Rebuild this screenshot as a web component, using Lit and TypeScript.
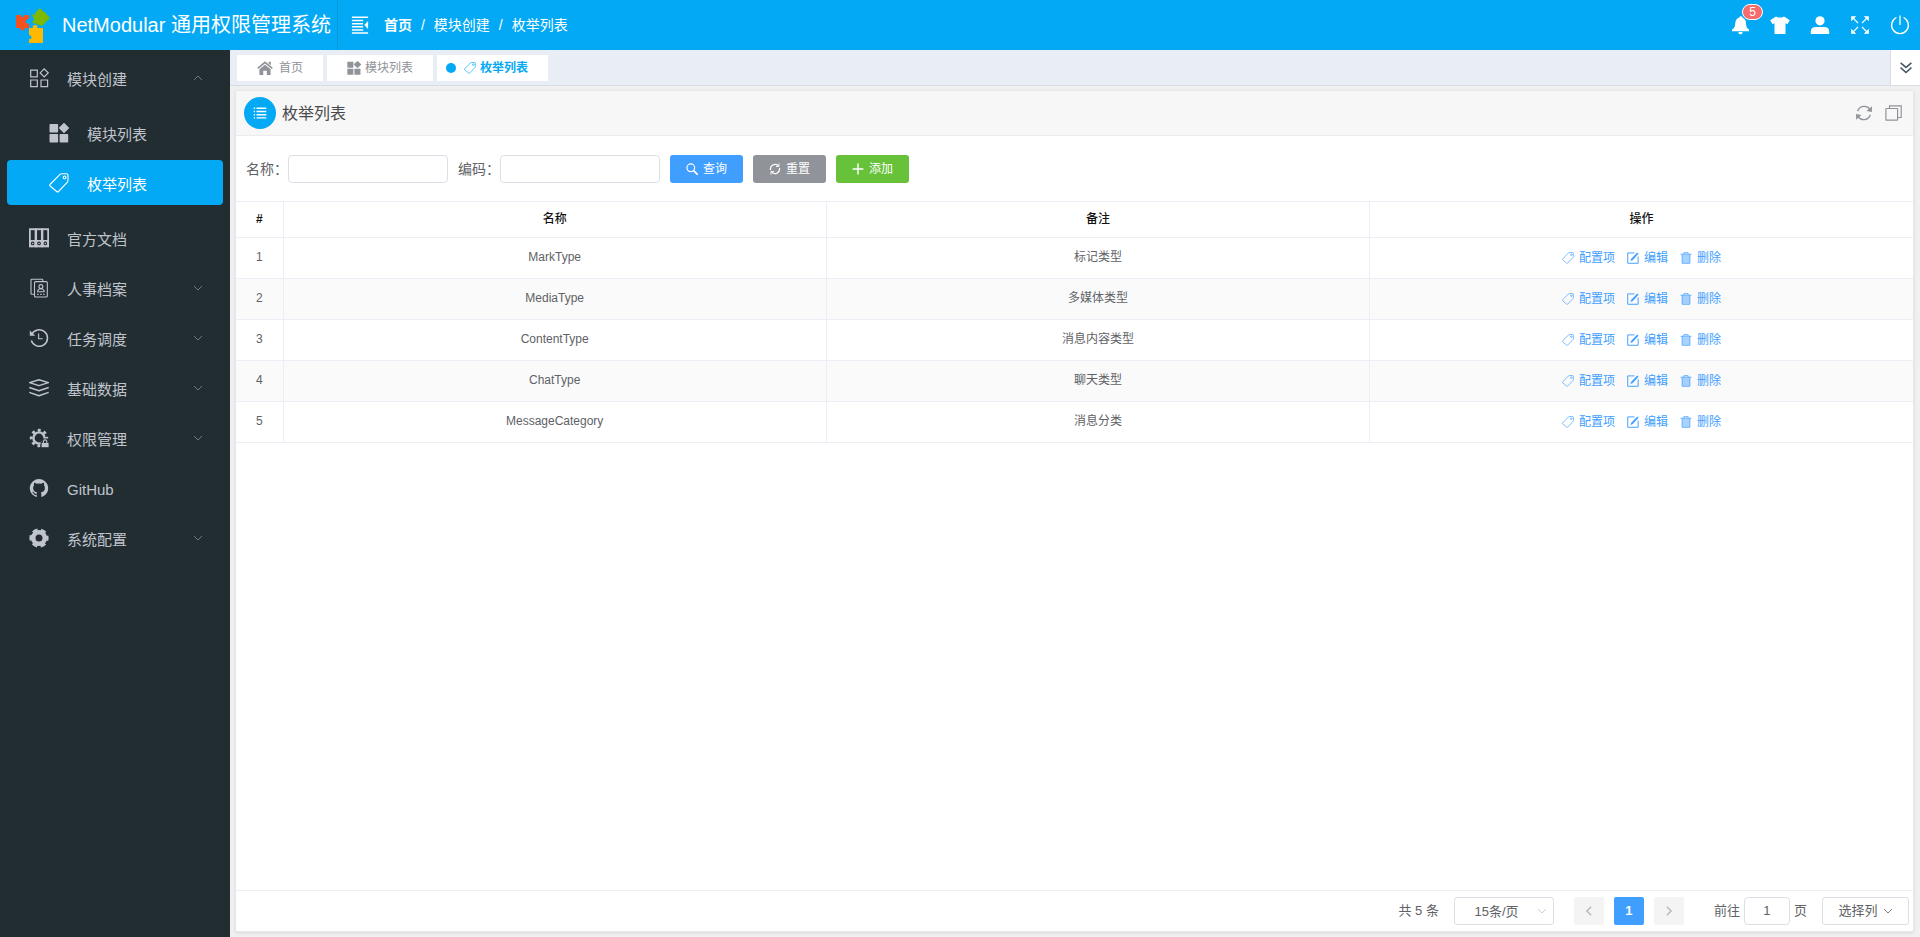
import { LitElement, html, svg, css, nothing } from "lit";
import { customElement } from "lit/decorators.js";
import { classMap } from "lit/directives/class-map.js";

const tag = svg`<g fill="none" stroke="currentColor" stroke-width="1.1" stroke-linejoin="round"><path d="M1 11.500 L10.500 1.800 Q11.500 .8 13 .8 H17.600 Q19 .8 19 2.200 V7 Q19 8.600 18 9.600 L9.500 18.500 Q8.600 19.400 7.700 18.500 L1.100 13 Q.4 12.200 1 11.500Z"/><circle cx="15.600" cy="4.400" r="1.400"/></g>`;

const icons: Record<string, unknown> = {
  tag,
  modules: svg`<g fill="none" stroke="currentColor" stroke-width="1.200"><path d="M1.700 2.200h6.600v6.600H1.700zM1.700 12h6.600v6.600H1.700zM12 12h6.600v6.600H12zM15.200 .9l4 4-4 4-4-4z"/></g>`,
  grid: svg`<g fill="currentColor"><rect x="0.5" y="1" width="8.6" height="8.6" rx=".8"/><rect x="0.5" y="11" width="8.6" height="8.6" rx=".8"/><rect x="10.6" y="11" width="8.6" height="8.6" rx=".8"/><rect x="11.2" y="1.2" width="7.6" height="7.6" rx=".8" transform="rotate(45 15 5)"/></g>`,
  books: svg`<g fill="none" stroke="currentColor" stroke-width="1.9"><rect x=".8" y="1.2" width="5.8" height="17.2"/><rect x="7.1" y="1.2" width="5.8" height="17.2"/><rect x="13.4" y="1.2" width="5.8" height="17.2"/></g><path fill="currentColor" fill-rule="evenodd" d="M.8 12h18.4v7H.8zM3.7 13.6a1.9 1.9 0 1 0 .01 0M10 13.6a1.9 1.9 0 1 0 .01 0M16.3 13.6a1.9 1.9 0 1 0 .01 0"/><g fill="currentColor"><circle cx="3.7" cy="15.5" r=".8"/><circle cx="10" cy="15.5" r=".8"/><circle cx="16.3" cy="15.5" r=".8"/></g>`,
  archive: svg`<g fill="none" stroke="currentColor" stroke-width="1.1" stroke-linejoin="round"><path d="M5.5 16.200H2.800Q2 16.200 2 15.400V2Q2 1.200 2.800 1.200H13Q13.800 1.200 13.800 2V3.600"/><rect x="5.5" y="3.6" width="12.8" height="15.4" rx="1"/><circle cx="11.9" cy="8.6" r="2"/><path d="M8.6 13.800Q8.600 10.800 11.900 10.800T15.200 13.800ZM8.200 16.400h1.400M11.200 16.400h1.400M14.200 16.400h1.400"/></g>`,
  history: svg`<g fill="none" stroke="currentColor" stroke-width="1.5"><path d="M2.600 6.600A8.300 8.300 0 1 1 2.300 12.600"/><path d="M9.600 5.600v5.200h4.200" stroke-width="1.1"/></g><path fill="currentColor" d="M.8 2.400v5.400h5.400z"/>`,
  layers: svg`<g fill="none" stroke="currentColor" stroke-width="1.500" stroke-linejoin="round"><path d="M.6 4.600L10 1.800 19.400 4.600 10 7.600ZM.3 9.500L10 12.800l9.700-3.300M.3 14.400L10 17.800 19.700 14.400"/></g>`,
  gearLock: svg`<g fill="none" stroke="currentColor"><circle cx="10" cy="10" r="5.600" stroke-width="2.400"/><circle cx="10" cy="10" r="7.800" stroke-width="2.800" stroke-dasharray="2.900 3.226" stroke-dashoffset="1.450"/></g><path fill="#222d32" d="M11.600 13.400h1.400v-3h7V20h-8.400z"/><path fill="currentColor" d="M12.600 15h7v4.200h-7z"/><path d="M14.400 15v-1.400a1.700 1.700 0 0 1 3.400 0V15" fill="none" stroke="currentColor" stroke-width="1.1"/>`,
  github: svg`<path fill="currentColor" transform="translate(.8 .8) scale(1.150)" d="M8 .2a8 8 0 0 0-2.53 15.59c.4.07.55-.17.55-.38v-1.5c-2 .37-2.53-.49-2.69-.94-.09-.23-.48-.94-.82-1.13-.28-.15-.68-.52-.01-.53.63-.01 1.08.58 1.23.82.72 1.21 1.87.87 2.33.66.07-.52.28-.87.51-1.07-1.78-.2-3.64-.89-3.64-3.95 0-.87.31-1.59.82-2.15-.08-.2-.36-1.02.08-2.12 0 0 .67-.21 2.2.82a7.6 7.6 0 0 1 4 0c1.53-1.04 2.2-.82 2.2-.82.44 1.1.16 1.92.08 2.12.51.56.82 1.27.82 2.15 0 3.07-1.87 3.75-3.65 3.95.29.25.54.73.54 1.48v2.19c0 .21.15.46.55.38A8 8 0 0 0 8 .2z"/>`,
  gear: svg`<g fill="none" stroke="currentColor"><circle cx="10" cy="10" r="5.800" stroke-width="4.600"/><circle cx="10" cy="10" r="8.200" stroke-width="2.800" stroke-dasharray="5.200 3.387" stroke-dashoffset="2.600"/></g>`,
  bell: svg`<path fill="currentColor" d="M10.800 1.200c1 0 1.500.6 1.500 1.400 2.600 1 3.600 3.200 3.700 5.600.1 3.600 1 5 3 6.400v1.600H2l.0-1.600C4.400 13.400 5 11.600 5.300 8c.2-2.600 1.600-4.600 4-5.400 0-.8.5-1.400 1.500-1.400zM8.400 17h4.200c0 1.400-.9 2.300-2.100 2.300S8.400 18.400 8.400 17z"/>`,
  shirt: svg`<path fill="currentColor" d="M6 1.400q4 2.400 8 0l5.800 3.800-2.400 4-1.900-.9V19H4.500V8.300l-1.900.9-2.400-4z"/>`,
  user: svg`<g fill="currentColor"><circle cx="10" cy="5.800" r="4.600"/><path d="M.8 19v-2.600Q.8 12 6.200 12h7.600q5.400 0 5.400 4.400V19z"/></g>`,
  full: svg`<g fill="none" stroke="currentColor" stroke-width="1.200"><path d="M2 2l6 6M18 2l-6 6M2 18l6-6M18 18l-6-6"/></g><path fill="currentColor" d="M1.200 1.200h5l-5 5zM18.800 1.200v5l-5-5zM1.200 18.800v-5l5 5zM18.800 18.800h-5l5-5z"/>`,
  power: svg`<path fill="none" stroke="currentColor" stroke-width="1.300" stroke-linecap="round" d="M10 .8v8.600M6 2.800a8.400 8.400 0 1 0 8 0"/>`,
  fold: svg`<g fill="none" stroke="currentColor" stroke-width="1.700"><path d="M1 1.500h18M1 5h12.500M1 8.500h12.500M1 12h12.500M1 15.500h12.500M1 18.800h18"/></g><path fill="currentColor" d="M19 5.500v9l-4.200-4.500z"/>`,
  home: svg`<path fill="currentColor" d="M10 1.600l9.800 8.200-1.300 1.500L10 4.300l-8.500 7L.2 9.800zM14.600 2.200h2.600v4.500l-2.600-2.200zM10 5.800l7 5.800v7.200h-4.800v-5.400H7.800v5.400H3v-7.200z"/>`,
  list: svg`<g fill="currentColor"><path d="M5 2.200h14v2H5zM5 6.800h14v2H5zM5 11.400h14v2H5zM5 16h14v2H5zM1 2.200h2v2H1zM1 6.800h2v2H1zM1 11.400h2v2H1zM1 16h2v2H1z"/></g>`,
  refresh: svg`<g fill="none" stroke="currentColor" stroke-width="1.500"><path d="M3 8A7.600 7.600 0 0 1 16.600 6M17 12A7.600 7.600 0 0 1 3.400 14"/></g><path fill="currentColor" d="M18.800 2.600v6.200l-6-1zM1.200 17.400v-6.200l6 1z"/>`,
  windows: svg`<g fill="none" stroke="currentColor" stroke-width="1.300"><rect x="1" y="5" width="13" height="13" rx=".6"/><path d="M5 5V2h13v13h-4"/></g>`,
  search: svg`<g fill="none" stroke="currentColor" stroke-width="2" stroke-linecap="round"><circle cx="8" cy="8" r="6.400"/><path d="M13 13l5.600 5.600" stroke-width="2.800"/></g>`,
  reset: svg`<g fill="none" stroke="currentColor" stroke-width="2"><path d="M2.600 12A7.800 7.800 0 0 1 15.400 4.400M17.400 8A7.800 7.800 0 0 1 4.600 15.600"/><path d="M16.600.8v5h-5M3.400 19.200v-5h5" stroke-width="1.600"/></g>`,
  plus: svg`<path fill="none" stroke="currentColor" stroke-width="2.400" d="M10 1v18M1 10h18"/>`,
  edit: svg`<g fill="none" stroke="currentColor" stroke-width="1.600"><path d="M12.500 1.500H1.200v17.300h17.400V7.500"/></g><path fill="currentColor" d="M17.200.8l2 2-10 10.800-3.600 1.600 1.400-3.800z"/>`,
  trash: svg`<path fill="currentColor" opacity=".45" d="M4 5h12v13H4z"/><g fill="none" stroke="currentColor" stroke-width="1.400"><path d="M1 3.800h18M6.500 3.500V1.200h7v2.300M3.600 4v14.800h12.800V4"/></g>`,
  down: svg`<path fill="none" stroke="currentColor" stroke-width="1.700" d="M2 6l8 8 8-8"/>`,
  up: svg`<path fill="none" stroke="currentColor" stroke-width="1.700" d="M2 14l8-8 8 8"/>`,
  left: svg`<path fill="none" stroke="currentColor" stroke-width="2.400" d="M13.500 3l-7 7 7 7"/>`,
  right: svg`<path fill="none" stroke="currentColor" stroke-width="2.400" d="M6.500 3l7 7-7 7"/>`,
  dbldown: svg`<path fill="none" stroke="currentColor" stroke-width="2.600" d="M1 1.500l9 7.500 9-7.500M1 9.500l9 8 9-8"/>`,
};

const icon = (name: string, size = "") =>
  html`<svg class="icon ${size}" viewBox="0 0 20 20" aria-hidden="true">${icons[name]}</svg>`;

interface MenuItem {
  label: string;
  icon: string;
  arrow?: "up" | "down";
  active?: boolean;
  children?: MenuItem[];
}

const menu: MenuItem[] = [
  {
    label: "模块创建",
    icon: "modules",
    arrow: "up",
    children: [
      { label: "模块列表", icon: "grid" },
      { label: "枚举列表", icon: "tag", active: true },
    ],
  },
  { label: "官方文档", icon: "books" },
  { label: "人事档案", icon: "archive", arrow: "down" },
  { label: "任务调度", icon: "history", arrow: "down" },
  { label: "基础数据", icon: "layers", arrow: "down" },
  { label: "权限管理", icon: "gearLock", arrow: "down" },
  { label: "GitHub", icon: "github" },
  { label: "系统配置", icon: "gear", arrow: "down" },
];

const rows = [
  ["MarkType", "标记类型"],
  ["MediaType", "多媒体类型"],
  ["ContentType", "消息内容类型"],
  ["ChatType", "聊天类型"],
  ["MessageCategory", "消息分类"],
];

const base = css`
  * { box-sizing: border-box; }
  a { color: inherit; text-decoration: none; }
  button, input, select { font: inherit; color: inherit; margin: 0; }
  button { border: 0; padding: 0; background: none; cursor: pointer; }
  .icon { width: 20px; height: 20px; flex: none; display: block; }
  .s18 { width: 18px; height: 18px; }
  .s16 { width: 16px; height: 16px; }
  .s14 { width: 14px; height: 14px; }
  .s12 { width: 12px; height: 12px; }
  .s10 { width: 10px; height: 10px; }
`;

@customElement("app-header")
export class AppHeader extends LitElement {
  static styles = [base, css`
    :host { display: flex; height: 50px; background: #03a9f4; color: #fff; }
    .brand { display: flex; align-items: center; padding: 0 6px 0 14px; gap: 12px; font-size: 20px; line-height: 50px; white-space: nowrap; border-right: 1px solid #0299dd; }
    .logo { width: 36px; height: 36px; flex: none; }
    .bar { display: flex; align-items: center; flex: 1; padding: 0 10px 0 13px; }
    .crumbs { display: flex; gap: 9px; margin-left: 15px; font-size: 14px; line-height: 20px; }
    .home { font-weight: 700; }
    .actions { display: flex; gap: 20px; margin-left: auto; }
    .action { position: relative; display: flex; align-items: center; height: 50px; }
    .badge { position: absolute; left: 12px; top: 4px; height: 16px; padding: 0 6px; min-width: 21px; border: 1px solid #fff; border-radius: 8px; background: #f56c6c; font-size: 12px; line-height: 14px; text-align: center; }
  `];
  render() {
    return html`
      <div class="brand">
        <svg class="logo" viewBox="0 0 36 36" aria-hidden="true">
          <path fill="#f4511e" d="M2 8h5q-.6 2 1.300 2.300Q10.500 10 10 8h5v4q-3.400-.4-3.400 2.500 0 2.200 3.400 2V21h-4q0 2.500-2.300 2.500T6 21H2z"/>
          <path fill="#7cb900" d="M17.500 7l3.500 1q1.200-.6 0-2l5-5 3.500 4q2.300-.6 2 1.200l4.500 4.500-8.500 9q-1.600-3-3.200-1.700-2-.2-2.300-1.500-2.300.5-3.600-1-.4-1.800 2-2.700z"/>
          <path fill="#ffb900" d="M15 21h4q-1-2.800 2.200-3 3 .2 2 3h5.800v15H15v-4q2 .7 2.600-1.500Q17 27.500 15 28z"/>
        </svg>
        <span>NetModular 通用权限管理系统</span>
      </div>
      <div class="bar">
        <button aria-label="折叠菜单">${icon("fold", "s18")}</button>
        <nav class="crumbs"><a class="home" href="#">首页</a><span>/</span><span>模块创建</span><span>/</span><span>枚举列表</span></nav>
        <div class="actions">
          <button class="action" aria-label="消息">${icon("bell")}<span class="badge">5</span></button>
          <button class="action" aria-label="皮肤">${icon("shirt")}</button>
          <button class="action" aria-label="用户">${icon("user")}</button>
          <button class="action" aria-label="全屏">${icon("full")}</button>
          <button class="action" aria-label="退出">${icon("power")}</button>
        </div>
      </div>`;
  }
}

@customElement("app-sidebar")
export class AppSidebar extends LitElement {
  static styles = [base, css`
    :host { display: block; background: #222d32; color: #c0c4cc; padding: 5px 7px; font-size: 15px; }
    .menu, .sub { list-style: none; margin: 0; padding: 0; display: flex; flex-direction: column; gap: 5px; }
    .sub { padding: 10px 0 5px; }
    .item { display: flex; align-items: center; height: 45px; padding: 0 20px 0 22px; border-radius: 4px; line-height: 24px; }
    .child { padding-left: 42px; }
    .label { flex: 1; margin-left: 18px; padding-top: 5px; }
    .arrow { color: #7c868b; }
    .active { background: #03a9f4; color: #fff; }
  `];
  item(m: MenuItem, child = false): unknown {
    return html`<li>
      <a href="#" class=${classMap({ item: true, child, active: !!m.active })}>
        ${icon(m.icon)}<span class="label">${m.label}</span>
        ${m.arrow ? html`<span class="arrow">${icon(m.arrow, "s10")}</span>` : nothing}
      </a>
      ${m.children ? html`<ul class="sub">${m.children.map((c) => this.item(c, true))}</ul>` : nothing}
    </li>`;
  }
  render() {
    return html`<nav><ul class="menu">${menu.map((m) => this.item(m))}</ul></nav>`;
  }
}

@customElement("app-tabs")
export class AppTabs extends LitElement {
  static styles = [base, css`
    :host { display: flex; height: 35px; background: #e9eef6; border-bottom: 1px solid #d8dce5; color: #909399; font-size: 12px; }
    .tabs { display: flex; flex: 1; gap: 4px; padding: 5px 7px 4px; }
    .tab { display: flex; align-items: center; gap: 4px; padding: 0 20px 1px; background: #fff; line-height: 20px; white-space: nowrap; }
    .first { gap: 6px; }
    .active { color: #03a9f4; font-weight: 700; padding-left: 9px; }
    .dot { width: 10px; height: 10px; margin-right: 4px; border-radius: 50%; background: #03a9f4; }
    .more { width: 30px; display: flex; align-items: center; justify-content: center; background: #fff; border-left: 1px solid #d8dce5; color: #48576a; }
  `];
  render() {
    return html`
      <nav class="tabs">
        <a href="#" class="tab first">${icon("home", "s16")}<span>首页</span></a>
        <a href="#" class="tab">${icon("grid", "s14")}<span>模块列表</span></a>
        <a href="#" class="tab active"><i class="dot"></i>${icon("tag", "s12")}<span>枚举列表</span></a>
      </nav>
      <button class="more" aria-label="更多">${icon("dbldown", "s12")}</button>`;
  }
}

@customElement("enum-list")
export class EnumList extends LitElement {
  static styles = [base, css`
    :host { display: flex; flex-direction: column; background: #fff; border: 1px solid #e6e8ec; border-radius: 2px; box-shadow: 0 1px 3px rgba(0, 0, 0, 0.1); color: #606266; font-size: 12px; }
    .head { display: flex; align-items: center; height: 45px; padding: 0 10px 0 8px; background: #f7f7f7; border-bottom: 1px solid #e9ebef; color: #909399; }
    .round { display: flex; align-items: center; justify-content: center; width: 32px; height: 32px; border-radius: 50%; background: #03a9f4; color: #fff; }
    .title { flex: 1; margin: 0 0 0 6px; padding-top: 2px; color: #48494c; font-size: 16px; font-weight: 400; line-height: 24px; }
    .tools { display: flex; gap: 12px; }
    .query { display: flex; align-items: center; gap: 10px; padding: 19px 10px 18px; }
    .field { display: flex; align-items: center; font-size: 14px; line-height: 28px; white-space: nowrap; }
    .input { width: 160px; height: 28px; border: 1px solid #dcdfe6; border-radius: 4px; background: #fff; padding: 0 8px; }
    .btn { display: flex; align-items: center; justify-content: center; gap: 5px; width: 73px; height: 28px; border-radius: 3px; color: #fff; line-height: 16px; }
    .primary { background: #409eff; }
    .info { background: #909399; }
    .success { background: #67c23a; }
    .table { width: 100%; border-collapse: collapse; table-layout: fixed; text-align: center; line-height: 20px; }
    .table th, .table td { height: 41px; padding: 0 0 2px; border: 1px solid #ebeef5; }
    .table th { height: 36px; color: #111; font-weight: 500; }
    .table .narrow { width: 47px; font-weight: 700; }
    .table .cell { padding: 0; }
    .table th:first-child, .table td:first-child { border-left: 0; }
    .table th:last-child, .table td:last-child { border-right: 0; }
    .table tbody tr:nth-child(even) { background: #fafafa; }
    .ops { display: flex; justify-content: center; gap: 12px; color: #409eff; }
    .op { display: flex; align-items: center; gap: 5px; }
    .foot { display: flex; align-items: center; justify-content: flex-end; height: 41px; margin-top: auto; padding: 0 4px; border-top: 1px solid #ebeef5; font-size: 13px; line-height: 28px; }
    .size { position: relative; display: flex; align-items: center; width: 100px; margin: 0 20px 0 15px; }
    .select { appearance: none; width: 100%; height: 28px; padding: 0 20px 0 5px; border: 1px solid #dcdfe6; border-radius: 3px; background: #fff; text-align: center; text-align-last: center; }
    .caret { position: absolute; right: 7px; color: #c0c4cc; pointer-events: none; }
    .pager { display: flex; gap: 10px; margin-right: 30px; }
    .page { display: flex; align-items: center; justify-content: center; width: 30px; height: 28px; border-radius: 2px; background: #f4f4f5; color: #b4b8bf; }
    .current { background: #409eff; color: #fff; font-weight: 700; }
    .jump { display: flex; gap: 4px; margin-right: 15px; }
    .num { width: 46px; text-align: center; }
    .cols { display: flex; align-items: center; justify-content: center; gap: 5px; width: 87px; height: 28px; border: 1px solid #dcdfe6; border-radius: 3px; }
  `];
  render() {
    return html`
      <header class="head">
        <span class="round">${icon("list", "s14")}</span>
        <h1 class="title">枚举列表</h1>
        <div class="tools">
          <button aria-label="刷新">${icon("refresh", "s18")}</button>
          <button aria-label="全屏">${icon("windows", "s18")}</button>
        </div>
      </header>
      <form class="query" @submit=${(e: Event) => e.preventDefault()}>
        <div class="field"><label for="name">名称：</label><input class="input" id="name" type="text" /></div>
        <div class="field"><label for="code">编码：</label><input class="input" id="code" type="text" /></div>
        <button class="btn primary" type="submit">${icon("search", "s12")}查询</button>
        <button class="btn info" type="reset">${icon("reset", "s12")}重置</button>
        <button class="btn success" type="button">${icon("plus", "s12")}添加</button>
      </form>
      <table class="table">
        <thead><tr><th class="narrow">#</th><th>名称</th><th>备注</th><th>操作</th></tr></thead>
        <tbody>
          ${rows.map(([name, remark], i) => html`<tr>
            <td>${i + 1}</td><td>${name}</td><td>${remark}</td>
            <td class="cell"><div class="ops">
              <a class="op" href="#">${icon("tag", "s12")}配置项</a>
              <a class="op" href="#">${icon("edit", "s12")}编辑</a>
              <a class="op" href="#">${icon("trash", "s12")}删除</a>
            </div></td>
          </tr>`)}
        </tbody>
      </table>
      <footer class="foot">
        <span>共 5 条</span>
        <div class="size">
          <select class="select" aria-label="每页条数"><option>15条/页</option></select>
          <span class="caret">${icon("down", "s10")}</span>
        </div>
        <div class="pager">
          <button class="page" aria-label="上一页" disabled>${icon("left", "s12")}</button>
          <button class="page current">1</button>
          <button class="page" aria-label="下一页" disabled>${icon("right", "s12")}</button>
        </div>
        <div class="jump">
          <label for="page">前往</label><input class="input num" id="page" type="text" .value=${"1"} /><span>页</span>
        </div>
        <button class="cols">选择列${icon("down", "s10")}</button>
      </footer>`;
  }
}

@customElement("app-root")
export class AppRoot extends LitElement {
  static styles = css`
    :host { display: flex; flex-direction: column; min-height: 100vh; background: #f0f0f0; font-family: "Liberation Sans", "Noto Sans CJK SC", sans-serif; }
    .body { display: flex; flex: 1; }
    .side { flex: none; width: 230px; box-sizing: border-box; }
    .main { display: flex; flex-direction: column; flex: 1; min-width: 0; }
    .panel { flex: 1; margin: 4px 6px 5px 5px; }
  `;
  render() {
    return html`
      <app-header></app-header>
      <div class="body">
        <app-sidebar class="side"></app-sidebar>
        <main class="main">
          <app-tabs></app-tabs>
          <enum-list class="panel"></enum-list>
        </main>
      </div>`;
  }
}
